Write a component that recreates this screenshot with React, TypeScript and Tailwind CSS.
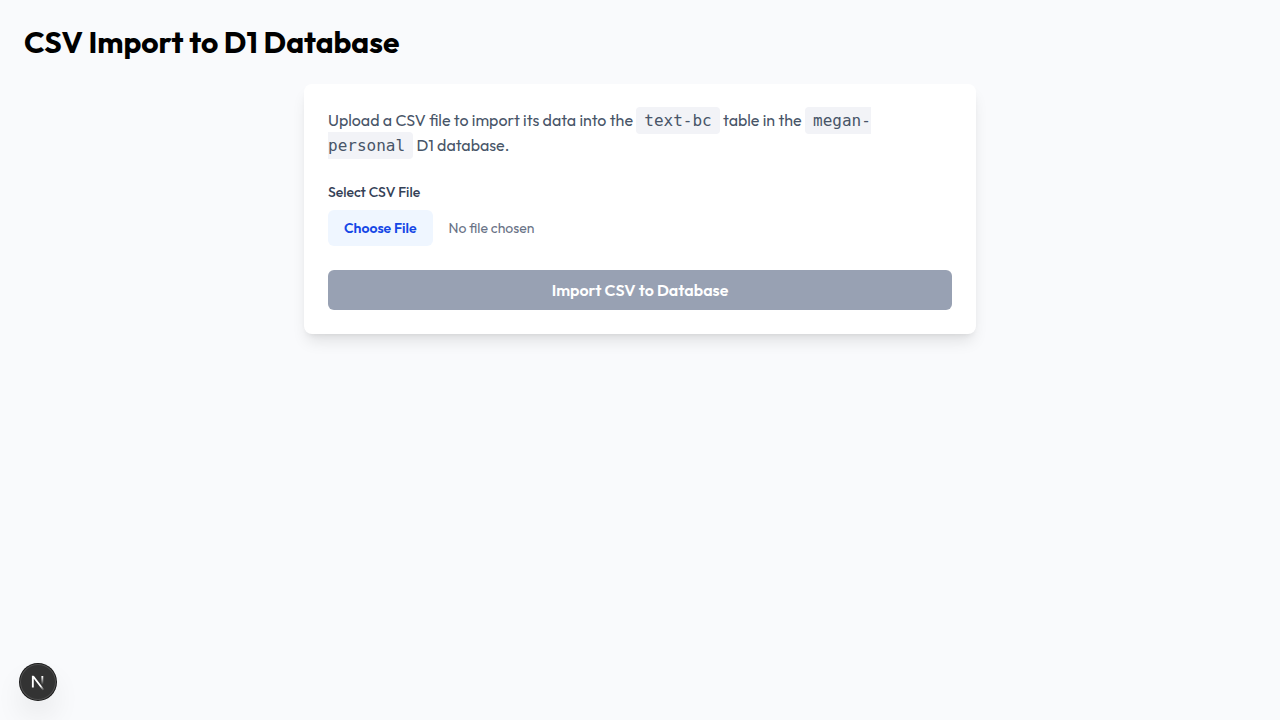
import React from "react";

function NextBadge() {
  return (
    <button
      type="button"
      aria-label="Open Next.js Dev Tools"
      className="fixed bottom-5 left-5 flex size-9 items-center justify-center rounded-full bg-[#333333] shadow-[0_0_0_1px_#171717,inset_0_0_0_1px_rgba(255,255,255,0.14),0_16px_32px_-8px_rgba(0,0,0,0.24)]"
    >
      <svg width="40" height="40" viewBox="0 0 40 40" fill="none" className="shrink-0" aria-hidden="true">
        <g transform="translate(12.5 13)" clipPath="url(#letterBounds)">
          <path d="M13.3 15.2 L2.34 1 V12.6" stroke="url(#diagonalFade)" strokeWidth="1.86" strokeMiterlimit="10" />
          <path d="M11.825 1 V13.1" stroke="url(#stemFade)" strokeWidth="1.86" />
        </g>
        <defs>
          <clipPath id="letterBounds">
            <rect x="0" y="0.8" width="16" height="16" />
          </clipPath>
          <linearGradient id="diagonalFade" x1="9.95555" y1="11.1226" x2="15.4778" y2="17.9671" gradientUnits="userSpaceOnUse">
            <stop stopColor="white" />
            <stop offset="0.604072" stopColor="white" stopOpacity="0" />
            <stop offset="1" stopColor="white" stopOpacity="0" />
          </linearGradient>
          <linearGradient id="stemFade" x1="11.8222" y1="1.40039" x2="11.791" y2="9.62542" gradientUnits="userSpaceOnUse">
            <stop stopColor="white" />
            <stop offset="1" stopColor="white" stopOpacity="0" />
          </linearGradient>
        </defs>
      </svg>
    </button>
  );
}

export default function App() {
  return (
    <div className="min-h-screen bg-[#f9fafc] font-['Outfit','Lato',sans-serif] text-black">
      <main className="p-6">
        <h1 className="mb-6 text-3xl font-bold leading-9">CSV Import to D1 Database</h1>
        <div className="mx-auto max-w-2xl rounded-lg bg-white p-6 shadow-lg">
          <p className="mb-6 text-base text-[#485568]">
            Upload a CSV file to import its data into the{" "}
            <code className="rounded bg-[#f2f3f7] px-2 py-1 font-['DejaVu_Sans_Mono',monospace]">text-bc</code> table in the{" "}
            <code className="rounded bg-[#f2f3f7] px-2 py-1 font-['DejaVu_Sans_Mono',monospace]">megan-personal</code> D1 database.
          </p>
          <label htmlFor="csv" className="mb-2 block text-sm font-medium text-[#344156]">Select CSV File</label>
          <input
            id="csv"
            type="file"
            accept=".csv"
            className="block w-full text-sm text-[#697286] file:mr-4 file:rounded-md file:border-0 file:bg-[#eff6ff] file:px-4 file:py-2 file:text-sm file:font-semibold file:text-[#1447e6]"
          />
          <button type="button" disabled className="mt-6 w-full rounded-md bg-[#98a1b3] px-4 py-2 font-semibold text-white">
            Import CSV to Database
          </button>
        </div>
      </main>
      <NextBadge />
    </div>
  );
}
